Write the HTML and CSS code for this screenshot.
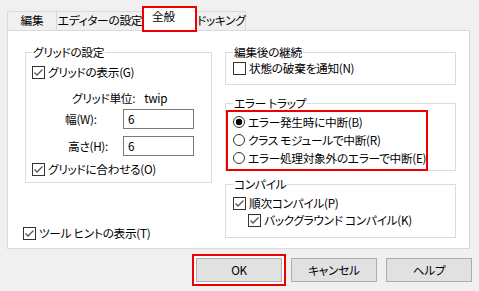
FILE: index.html
```html
<!DOCTYPE html>
<html lang="ja">
<head>
  <meta charset="UTF-8" />
  <title>オプション</title>
  <link rel="stylesheet" href="styles.css">
</head>
<body>
  <svg width="0" height="0" class="defs">
    <symbol id="box" viewBox="0 0 13 13">
      <rect x="0.5" y="0.5" width="12" height="12" fill="#fff" stroke="#333" />
    </symbol>
    <symbol id="tick" viewBox="0 0 13 13">
      <rect x="0.5" y="0.5" width="12" height="12" fill="#fff" stroke="#333" />
      <polyline points="2.5,6.5 5,9 10.5,3.5" fill="none" stroke="#555" stroke-width="1.3" />
    </symbol>
    <symbol id="radio" viewBox="0 0 12 12">
      <circle cx="6" cy="6" r="5.5" fill="#fff" stroke="#333" />
    </symbol>
    <symbol id="radio-on" viewBox="0 0 12 12">
      <circle cx="6" cy="6" r="5.5" fill="#fff" stroke="#333" />
      <circle cx="6" cy="6" r="3.2" fill="#000" />
    </symbol>
  </svg>

  <div class="dialog">
    <div class="tabs">
      <div class="tab tab-edit">編集</div>
      <div class="tab tab-editor">エディターの設定</div>
      <div class="tab tab-active">全般</div>
      <div class="tab tab-dock">ドッキング</div>
    </div>

    <div class="panel">
      <div class="col-left">
        <fieldset class="group group-grid">
          <legend>グリッドの設定</legend>
          <label class="check"><svg class="box"><use href="#tick" /></svg>グリッドの表示(G)</label>
          <div class="unit">グリッド単位:<span class="unit-val">twip</span></div>
          <div class="field field-w">
            <span class="field-label">幅(W):</span>
            <span class="textbox">6</span>
          </div>
          <div class="field field-h">
            <span class="field-label">高さ(H):</span>
            <span class="textbox">6</span>
          </div>
          <label class="check check-snap"><svg class="box"><use href="#tick" /></svg>グリッドに合わせる(O)</label>
        </fieldset>
        <label class="check check-tips"><svg class="box"><use href="#tick" /></svg>ツール ヒントの表示(T)</label>
      </div>

      <div class="col-right">
        <fieldset class="group group-continue">
          <legend>編集後の継続</legend>
          <label class="check"><svg class="box"><use href="#box" /></svg>状態の破棄を通知(N)</label>
        </fieldset>

        <fieldset class="group group-trap">
          <legend>エラー トラップ</legend>
          <div class="radios">
            <label class="radio"><svg class="dot"><use href="#radio-on" /></svg>エラー発生時に中断(B)</label>
            <label class="radio"><svg class="dot"><use href="#radio" /></svg>クラス モジュールで中断(R)</label>
            <label class="radio"><svg class="dot"><use href="#radio" /></svg>エラー処理対象外のエラーで中断(E)</label>
          </div>
        </fieldset>

        <fieldset class="group group-compile">
          <legend>コンパイル</legend>
          <label class="check check-first"><svg class="box"><use href="#tick" /></svg>順次コンパイル(P)</label>
          <label class="check check-sub"><svg class="box"><use href="#tick" /></svg>バックグラウンド コンパイル(K)</label>
        </fieldset>
      </div>
    </div>

    <div class="buttons">
      <button class="btn btn-default">OK</button>
      <button class="btn">キャンセル</button>
      <button class="btn">ヘルプ</button>
    </div>
  </div>
</body>
</html>
```

FILE: styles.css
```css
body {
  margin: 0;
  background: #f0f0f0;
  font-family: "Noto Sans CJK JP", sans-serif;
  font-size: 11.7px;
  line-height: 16px;
  letter-spacing: -0.3px;
  font-feature-settings: "palt";
  color: #000;
}
.defs {
  position: absolute;
}
.dialog {
  width: 479px;
  height: 291px;
}

/* tabs */
.tabs {
  display: flex;
  align-items: flex-end;
  height: 30px;
  padding-left: 7px;
}
.tab {
  box-sizing: border-box;
  height: 19px;
  border: 1px solid #d9d9d9;
  border-bottom: 0;
  background: #f0f0f0;
  text-align: center;
  white-space: nowrap;
  margin-left: -1px;
}
.tab-edit {
  width: 50px;
  margin-left: 0;
}
.tab-editor {
  width: 88px;
}
.tab-active {
  position: relative;
  z-index: 1;
  width: 55px;
  height: 26px;
  margin-left: -2px;
  margin-bottom: -2px;
  border: 2px solid #ee0000;
  background: #fff;
  text-align: left;
  padding-left: 8px;
}
.tab-dock {
  width: 50px;
}

/* panel */
.panel {
  box-sizing: border-box;
  margin-left: 7px;
  width: 463px;
  height: 219px;
  border: 1px solid #d9d9d9;
  background: #fff;
  display: grid;
  grid-template-columns: 187px 231px;
  column-gap: 13px;
  align-items: start;
  padding: 13px 0 0 17px;
}

.group {
  margin: 0;
  min-width: 0;
  border: 1px solid #dcdcdc;
  padding: 0 7px;
}
.group legend {
  padding: 0 1px;
  line-height: 16px;
}

.check,
.radio {
  display: flex;
  align-items: center;
  height: 16px;
  white-space: nowrap;
}
.box {
  width: 13px;
  height: 13px;
  margin-right: 3px;
  flex: none;
}
.dot {
  width: 12px;
  height: 12px;
  margin-right: 3px;
  flex: none;
}

/* grid group */
.group-grid {
  padding: 4px 6px 5px 6px;
}
.unit {
  margin-top: 10px;
  padding-left: 40px;
}
.unit-val {
  margin-left: 9px;
}
.field {
  display: flex;
  align-items: center;
  margin-top: 3px;
}
.field-h {
  margin-top: 7px;
}
.field-label {
  width: 58px;
  margin-left: 33px;
}
.field-h .field-label {
  width: 55px;
  margin-left: 36px;
}
.textbox {
  box-sizing: border-box;
  width: 71px;
  height: 20px;
  border: 1px solid #7a7a7a;
  padding-left: 4px;
  line-height: 18px;
}
.check-snap {
  margin-top: 5px;
}
.check-tips {
  margin-top: 42px;
  margin-left: -2px;
}

/* right column */
.group-continue {
  padding-bottom: 8px;
}
.group-trap {
  margin-top: 10px;
}
.radios {
  width: 202px;
  box-sizing: border-box;
  margin: -1px 0 -1px -7px;
  border: 2px solid #ee0000;
  padding: 1px 0 2px 5px;
}
.radio {
  height: 18px;
}
.group-compile {
  margin-top: 5px;
  padding-bottom: 9px;
}
.check-first {
  margin-top: 3px;
}
.check-sub {
  margin-top: 1px;
  margin-left: 15px;
}

/* buttons */
.buttons {
  display: flex;
  justify-content: flex-end;
  gap: 9px;
  margin-top: 9px;
  padding-right: 7px;
}
.btn {
  box-sizing: border-box;
  width: 86px;
  height: 24px;
  border: 1px solid #adadad;
  background: #e1e1e1;
  font: inherit;
  letter-spacing: inherit;
  font-feature-settings: "palt";
  color: #000;
  padding: 0;
}
.btn-default {
  box-shadow: 0 0 0 2px #fff, 0 0 0 4px #ee0000;
}
```
